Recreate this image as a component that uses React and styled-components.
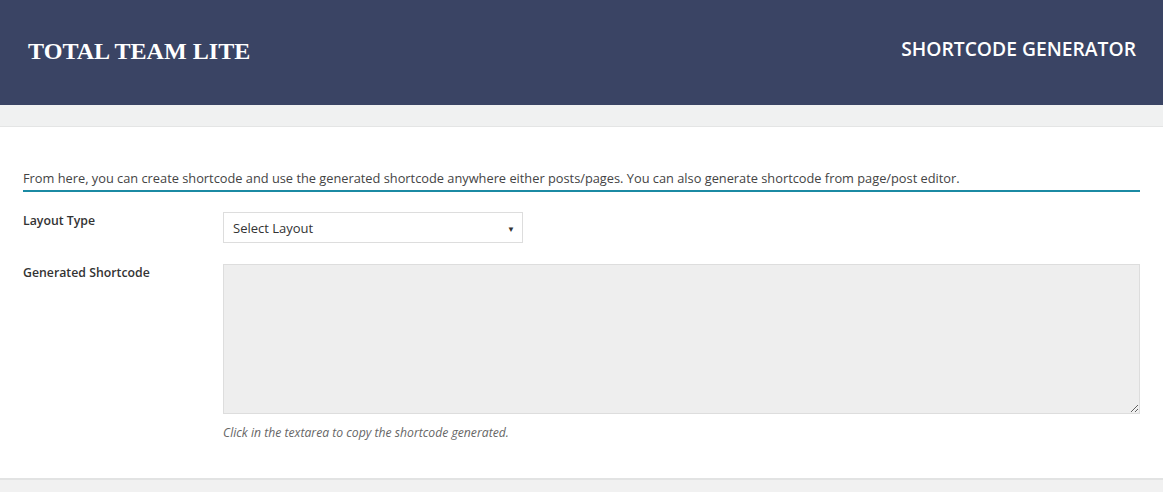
import React from "react";
import styled, { createGlobalStyle } from "styled-components";

const GlobalStyle = createGlobalStyle`
  html, body { margin: 0; padding: 0; background: #f1f1f1; }
  body { font-family: "Open Sans", "Noto Sans", sans-serif; }
`;

const Header = styled.div`
  height: 105px;
  background: #3a4464;
  display: flex;
  align-items: flex-start;
  justify-content: space-between;
  padding: 0 27px 0 28px;
`;

const Brand = styled.h1`
  margin: 38px 0 0;
  font-family: "Liberation Serif", "Times New Roman", serif;
  font-weight: bold;
  font-size: 24.1px;
  color: #fff;
`;

const PageTitle = styled.h2`
  margin: 35px 0 0;
  font-size: 19.3px;
  font-weight: 600;
  color: #fff;
`;

const Spacer = styled.div`
  height: 21px;
  background: #f0f1f1;
  border-bottom: 1px solid #e4e5e5;
`;

const Panel = styled.div`
  background: #fff;
  padding: 42px 23px 39px 23px;
  border-bottom: 2px solid #e2e3e3;
  height: 353px;
  box-sizing: border-box;
`;

const Intro = styled.p`
  margin: 0;
  font-size: 12.8px;
  color: #444;
  padding-bottom: 3px;
  border-bottom: 2px solid #1b8aa3;
`;

const Row = styled.div`
  display: flex;
  margin-top: ${({ top }) => top}px;
`;

const Label = styled.label`
  width: 200px;
  flex-shrink: 0;
  font-size: 12.3px;
  font-weight: 600;
  color: #333;
`;

const Field = styled.div`
  flex: 1;
  display: flex;
  flex-direction: column;
`;

const Select = styled.div`
  width: 300px;
  height: 31px;
  box-sizing: border-box;
  border: 1px solid #ddd;
  display: flex;
  align-items: center;
  justify-content: space-between;
  padding: 1px 7px 0 9px;
  font-size: 13px;
  color: #333;
  background: #fff;
`;

const Arrow = styled.span`
  font-size: 8px;
  color: #333;
`;

const Textarea = styled.textarea`
  width: 917px;
  height: 150px;
  box-sizing: border-box;
  border: 1px solid #ddd;
  background: #eeeeee;
  resize: both;
  margin: 0;
`;

const Help = styled.p`
  margin: 10px 0 0;
  font-size: 12.2px;
  font-style: italic;
  color: #666;
`;

export default function App() {
  return (
    <>
      <GlobalStyle />
      <Header>
        <Brand>TOTAL TEAM LITE</Brand>
        <PageTitle>SHORTCODE GENERATOR</PageTitle>
      </Header>
      <Spacer />
      <Panel>
        <Intro>
          From here, you can create shortcode and use the generated shortcode anywhere either posts/pages. You can also generate shortcode from page/post editor.
        </Intro>
        <Row top={20}>
          <Label>Layout Type</Label>
          <Field>
            <Select>
              Select Layout
              <Arrow>▼</Arrow>
            </Select>
          </Field>
        </Row>
        <Row top={21}>
          <Label>Generated Shortcode</Label>
          <Field>
            <Textarea readOnly />
            <Help>Click in the textarea to copy the shortcode generated.</Help>
          </Field>
        </Row>
      </Panel>
    </>
  );
}
